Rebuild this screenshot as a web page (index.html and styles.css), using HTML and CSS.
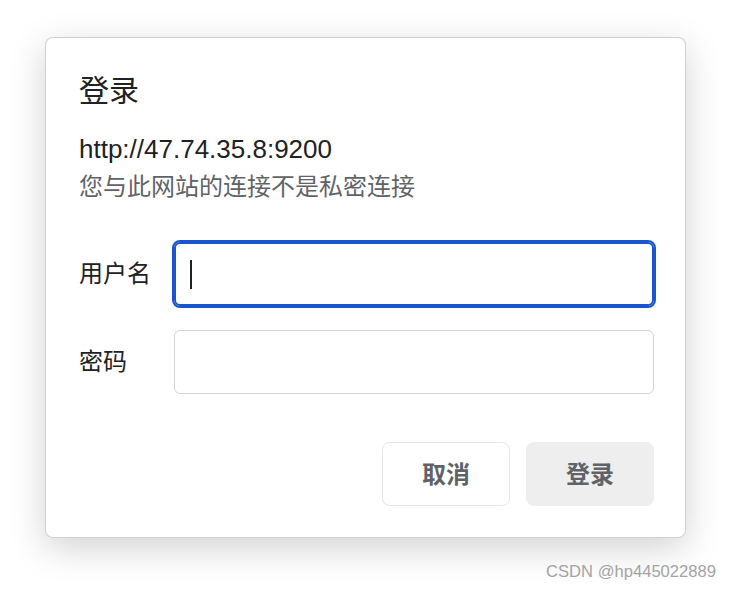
FILE: index.html
```html
<!DOCTYPE html>
<html lang="zh-CN">
<head>
  <meta charset="UTF-8" />
  <meta name="viewport" content="width=device-width, initial-scale=1.0" />
  <title>登录</title>
  <link rel="stylesheet" href="styles.css">
</head>
<body>
  <div class="dialog">
    <h1 class="dialog-title">登录</h1>
    <div class="origin">http://47.74.35.8:9200</div>
    <div class="notice">您与此网站的连接不是私密连接</div>

    <div class="form">
      <div class="form-row">
        <label class="form-label">用户名</label>
        <div class="field focused"><span class="caret"></span></div>
      </div>
      <div class="form-row">
        <label class="form-label">密码</label>
        <div class="field"></div>
      </div>
    </div>

    <div class="buttons">
      <button class="btn btn-cancel">取消</button>
      <button class="btn btn-login">登录</button>
    </div>
  </div>

  <div class="watermark">CSDN @hp445022889</div>
</body>
</html>
```

FILE: styles.css
```css
* {
  box-sizing: border-box;
}

body {
  margin: 0;
  width: 732px;
  height: 592px;
  overflow: hidden;
  background: #ffffff;
  font-family: 'Liberation Sans', 'Noto Sans CJK SC', sans-serif;
  color: #202124;
  padding: 37px 0 0 45px;
  position: relative;
}

.dialog {
  width: 641px;
  height: 501px;
  background: #ffffff;
  border: 1px solid rgba(0, 0, 0, 0.18);
  border-radius: 8px;
  box-shadow: 0 10px 36px rgba(0, 0, 0, 0.18);
  padding: 35px 31px 31px 33px;
  display: flex;
  flex-direction: column;
}

.dialog-title {
  margin: 0;
  font-size: 30px;
  font-weight: normal;
  line-height: 36px;
}

.origin {
  margin-top: 22px;
  font-size: 26px;
  line-height: 37px;
}

.notice {
  font-size: 24px;
  line-height: 37px;
  color: #5f6368;
}

.form {
  margin-top: 37px;
  display: flex;
  flex-direction: column;
  gap: 24px;
}

.form-row {
  display: flex;
  align-items: center;
}

.form-label {
  width: 95px;
  font-size: 24px;
  padding-bottom: 5px;
}

.field {
  width: 480px;
  height: 64px;
  border: 1px solid #d4d6da;
  border-radius: 6px;
  display: flex;
  align-items: center;
  padding-left: 15px;
}

.field.focused {
  border: 2px solid #1a55d0;
  outline: 2px solid #1a55d0;
  padding-left: 14px;
}

.caret {
  width: 2px;
  height: 29px;
  background: #202124;
}

.buttons {
  margin-top: 48px;
  display: flex;
  justify-content: flex-end;
  gap: 16px;
}

.btn {
  width: 128px;
  height: 64px;
  border-radius: 8px;
  font-family: inherit;
  font-size: 24px;
  font-weight: bold;
  color: #5f6368;
  padding: 0 0 4px;
  cursor: pointer;
}

.btn-cancel {
  background: #ffffff;
  border: 1px solid #e6e6e6;
}

.btn-login {
  background: #eeeeee;
  border: none;
}

.watermark {
  position: absolute;
  right: 16px;
  top: 562px;
  font-size: 16.6px;
  color: #a3a3a3;
}
```
